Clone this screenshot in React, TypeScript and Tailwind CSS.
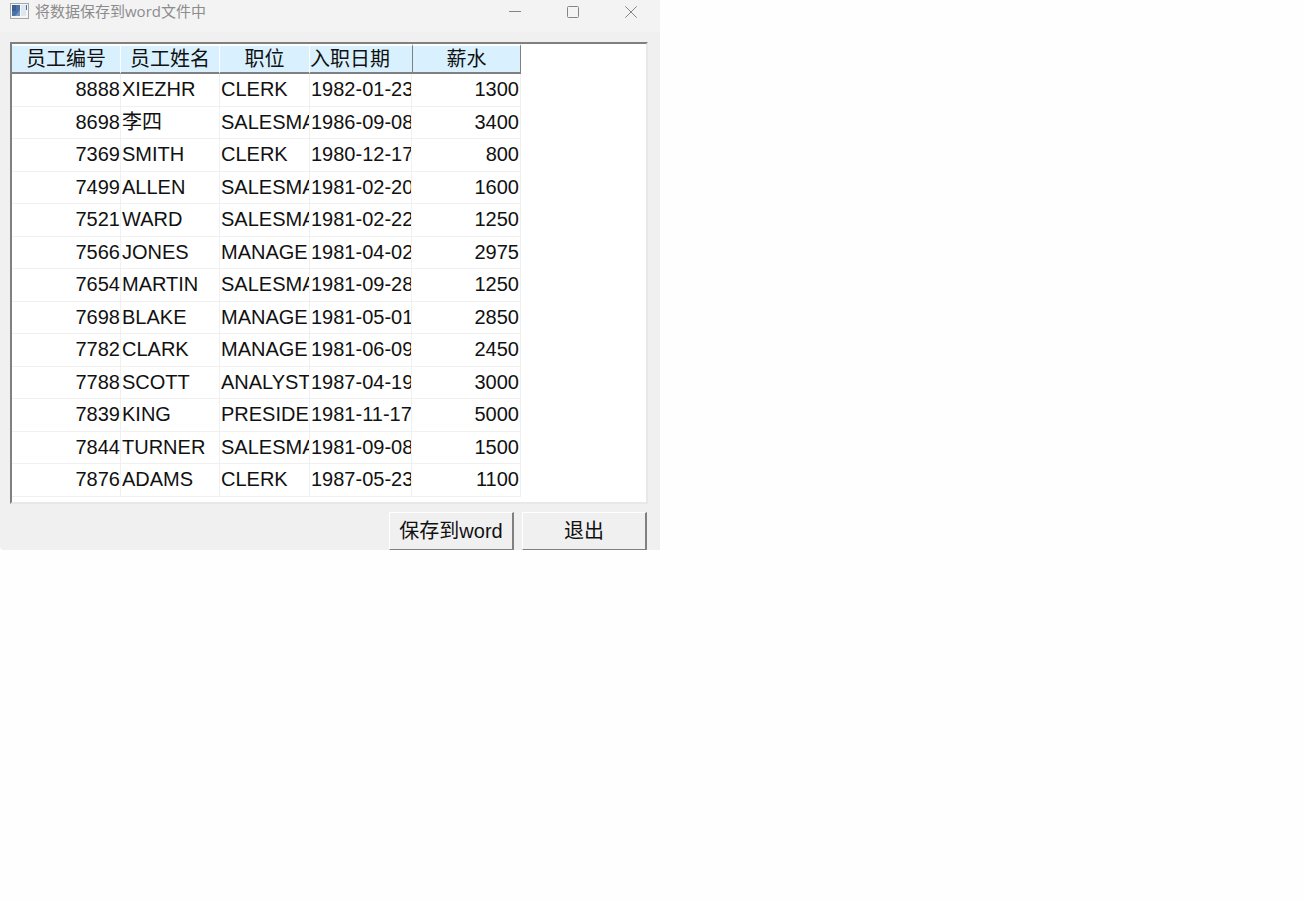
import { useState } from 'react';

interface Employee {
    id: number;
    name: string;
    job: string;
    hireDate: string;
    salary: number;
}

const EMPLOYEES: Employee[] = [
    { id: 8888, name: 'XIEZHR', job: 'CLERK', hireDate: '1982-01-23', salary: 1300 },
    { id: 8698, name: '李四', job: 'SALESMAN', hireDate: '1986-09-08', salary: 3400 },
    { id: 7369, name: 'SMITH', job: 'CLERK', hireDate: '1980-12-17', salary: 800 },
    { id: 7499, name: 'ALLEN', job: 'SALESMAN', hireDate: '1981-02-20', salary: 1600 },
    { id: 7521, name: 'WARD', job: 'SALESMAN', hireDate: '1981-02-22', salary: 1250 },
    { id: 7566, name: 'JONES', job: 'MANAGER', hireDate: '1981-04-02', salary: 2975 },
    { id: 7654, name: 'MARTIN', job: 'SALESMAN', hireDate: '1981-09-28', salary: 1250 },
    { id: 7698, name: 'BLAKE', job: 'MANAGER', hireDate: '1981-05-01', salary: 2850 },
    { id: 7782, name: 'CLARK', job: 'MANAGER', hireDate: '1981-06-09', salary: 2450 },
    { id: 7788, name: 'SCOTT', job: 'ANALYST', hireDate: '1987-04-19', salary: 3000 },
    { id: 7839, name: 'KING', job: 'PRESIDENT', hireDate: '1981-11-17', salary: 5000 },
    { id: 7844, name: 'TURNER', job: 'SALESMAN', hireDate: '1981-09-08', salary: 1500 },
    { id: 7876, name: 'ADAMS', job: 'CLERK', hireDate: '1987-05-23', salary: 1100 },
];

const HEAD = 'h-[30px] overflow-hidden whitespace-nowrap border-t-2 border-b-2 border-t-white border-b-[#808080] bg-[#d9f1ff] p-0 font-normal leading-6';
const CELL = 'overflow-hidden whitespace-nowrap border-r border-b border-[#f0f0f0] p-0 align-top leading-[30px]';
const BUTTON = 'h-[38px] w-[125px] border-t border-l border-r-2 border-b border-t-white border-l-white border-r-[#808080] border-b-[#808080] bg-[#f0f0f0] text-xl leading-6 text-[#111] active:bg-[#e5e5e5]';

export default function App() {
    const [open, setOpen] = useState(true);

    return (
        <div className="min-h-screen bg-[#fefefe] font-['Liberation_Sans','Noto_Sans_CJK_SC',sans-serif] text-[#111]">
            {open && (
                <main className="w-full max-w-[660px] overflow-hidden rounded-bl bg-[#f0f0f0]">
                    <TitleBar onClose={() => setOpen(false)} />

                    <div className="pt-2.5 pr-3 pl-2.5">
                        {/* Employee grid */}
                        <div className="overflow-hidden border-2 border-t-[#808080] border-r-[#e8e8e8] border-b-[#e8e8e8] border-l-[#808080] bg-white pb-[5px]">
                            <table className="w-[509px] table-fixed border-separate border-spacing-0 text-xl">
                                <colgroup>
                                    <col className="w-[109px]" />
                                    <col className="w-[99px]" />
                                    <col className="w-[90px]" />
                                    <col className="w-[102px]" />
                                    <col className="w-[109px]" />
                                </colgroup>
                                <thead>
                                    <tr>
                                        <th scope="col" className={`${HEAD} border-r border-r-white`}>员工编号</th>
                                        <th scope="col" className={`${HEAD} border-r border-r-white`}>员工姓名</th>
                                        <th scope="col" className={`${HEAD} border-r border-r-white`}>职位</th>
                                        <th scope="col" className={`${HEAD} text-left`}>入职日期</th>
                                        <th scope="col" className={`${HEAD} border-r border-l border-r-[#808080] border-l-[#808080]`}>薪水</th>
                                    </tr>
                                </thead>
                                <tbody>
                                    {EMPLOYEES.map((e) => (
                                        <tr key={e.id} className="odd:h-[33px] even:h-8">
                                            <td className={`${CELL} text-right`}>{e.id}</td>
                                            <td className={`${CELL} pl-px`}>{e.name}</td>
                                            <td className={`${CELL} pl-px`}>{e.job}</td>
                                            <td className={`${CELL} pl-px`}>{e.hireDate}</td>
                                            <td className={`${CELL} pr-px text-right`}>{e.salary}</td>
                                        </tr>
                                    ))}
                                </tbody>
                            </table>
                        </div>

                        {/* Actions */}
                        <div className="flex justify-end gap-2 pt-2 pr-px">
                            <button type="button" className={BUTTON}>保存到word</button>
                            <button type="button" className={BUTTON} onClick={() => setOpen(false)}>退出</button>
                        </div>
                    </div>
                </main>
            )}
        </div>
    );
}

interface TitleBarProps {
    onClose: () => void;
}

function TitleBar({ onClose }: TitleBarProps) {
    return (
        <header className="flex h-8 items-start bg-[#f3f3f3] pl-2.5">
            <svg width="20" height="16" viewBox="0 0 20 16" className="mt-[3px] mr-[5px]" aria-hidden="true">
                <rect x="0.5" y="0.5" width="18" height="15" fill="#f4f6f8" stroke="#a3a7ab" />
                <rect x="2" y="2" width="8" height="11" fill="#4a72a8" />
                <path d="M2 2h4v6H2z" fill="#3c5f93" />
                <path d="M5 13l5-6v6z" fill="#7596bf" />
                <rect x="11" y="2" width="5" height="11" fill="#dfe7ee" />
                <rect x="16" y="2" width="1" height="5" fill="#3f6fa8" />
            </svg>
            <h1 className="flex-1 font-['Open_Sans','Noto_Sans_CJK_SC',sans-serif] text-[15px] leading-[22px] text-[#8c8c8c]">将数据保存到word文件中</h1>
            <div className="flex text-[#858585]">
                <button type="button" aria-label="最小化" className="flex h-6 w-[58px] items-center justify-center">
                    <svg width="12" height="12" viewBox="0 0 12 12" fill="none" stroke="currentColor"><path d="M0 5.5h12" /></svg>
                </button>
                <button type="button" aria-label="最大化" className="flex h-6 w-[58px] items-center justify-center">
                    <svg width="12" height="12" viewBox="0 0 12 12" fill="none" stroke="currentColor"><rect x="0.5" y="0.5" width="11" height="11" rx="1" /></svg>
                </button>
                <button type="button" aria-label="关闭" onClick={onClose} className="flex h-6 w-[58px] items-center justify-center">
                    <svg width="12" height="12" viewBox="0 0 12 12" fill="none" stroke="currentColor"><path d="M0.3 0.3l11.4 11.4M11.7 0.3L0.3 11.7" /></svg>
                </button>
            </div>
        </header>
    );
}
